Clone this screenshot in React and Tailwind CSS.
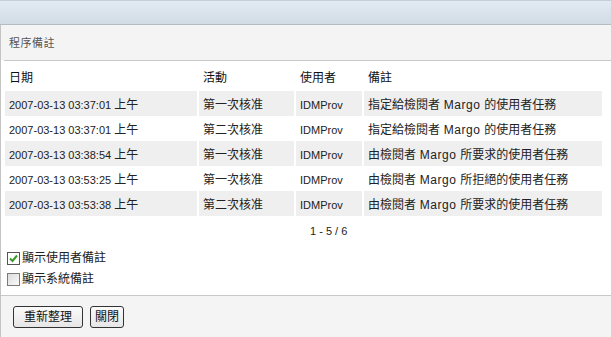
import React from "react";

const rows = [
  ["2007-03-13 03:37:01 上午", "第一次核准", "IDMProv", "指定給檢閱者 Margo 的使用者任務"],
  ["2007-03-13 03:37:01 上午", "第二次核准", "IDMProv", "指定給檢閱者 Margo 的使用者任務"],
  ["2007-03-13 03:38:54 上午", "第一次核准", "IDMProv", "由檢閱者 Margo 所要求的使用者任務"],
  ["2007-03-13 03:53:25 上午", "第一次核准", "IDMProv", "由檢閱者 Margo 所拒絕的使用者任務"],
  ["2007-03-13 03:53:38 上午", "第二次核准", "IDMProv", "由檢閱者 Margo 所要求的使用者任務"],
];

// CJK runs a touch bigger than latin runs, like the old MS fonts did
function Mixed({ text, latin = "text-[11px]" }) {
  const parts = text.split(/([\u3000-\u9fff\uff00-\uffef]+)/).filter(Boolean);
  return (
    <span className="whitespace-pre">
      {parts.map((p, i) =>
        /[\u3000-\u9fff]/.test(p) ? (
          <span key={i} className="text-[12px]">{p}</span>
        ) : (
          <span key={i} className={latin}>{p}</span>
        )
      )}
    </span>
  );
}

function Check({ checked }) {
  return (
    <span
      className={`flex h-[13px] w-[13px] items-center justify-center border ${
        checked ? "border-[#555] bg-white" : "border-[#7a7a7a] bg-gradient-to-br from-[#dcdcdc] to-[#fafafa]"
      }`}
    >
      {checked && (
        <svg width="9" height="9" viewBox="0 0 9 9">
          <path d="M1 4.5 L3.5 7 L8 1.5" fill="none" stroke="#3a9a2a" strokeWidth="2" />
        </svg>
      )}
    </span>
  );
}

export default function App() {
  return (
    <div
      className="h-[337px] w-[611px] overflow-hidden bg-white text-[#222]"
      style={{ fontFamily: '"Liberation Sans", "Noto Sans CJK TC", sans-serif' }}
    >
      <div className="h-[25px] border-t border-b border-t-[#c4ced8] border-b-[#b4bcc6] bg-gradient-to-b from-[#e2eaf2] to-[#d2dce5]" />
      <div className="border-l border-[#c4c4c4]">
        <div className="flex h-[35px] items-center bg-[#f4f4f4] pl-[8px] pt-[1px] text-[11px] tracking-[0.5px] text-[#555]">
          程序備註
        </div>
        <div className="ml-[3px] h-[1px] bg-[#c8c8c8]" />

        <div className="ml-[4px] mr-[9px] grid grid-cols-[192px_95px_66px_1fr] gap-x-[2px]">
          {["日期", "活動", "使用者", "備註"].map((h) => (
            <div key={h} className="flex h-[30px] items-center pt-[4px] pl-[4px] text-[12px] text-[#111]">
              {h}
            </div>
          ))}
          {rows.map((r, i) =>
            r.map((c, j) => (
              <div
                key={i + "-" + j}
                className={`flex h-[25px] items-center pl-[4px] whitespace-nowrap ${
                  i % 2 === 0 ? "bg-[#efefef]" : "bg-white"
                }`}
              >
                <Mixed text={c} latin={j === 3 ? "text-[12px] tracking-[0.5px]" : "text-[11px]"} />
              </div>
            ))
          )}
        </div>

        <div className="flex h-[30px] items-center pl-[309px] text-[11px]">1 - 5 / 6</div>

        <div className="flex flex-col gap-[7px] pl-[6px] pt-[5px] text-[12px]">
          <label className="flex h-[14px] items-center gap-[2px]">
            <Check checked />
            <span>顯示使用者備註</span>
          </label>
          <label className="flex h-[14px] items-center gap-[2px]">
            <Check />
            <span>顯示系統備註</span>
          </label>
        </div>

        <div className="mt-[9px] h-[1px] bg-[#c8c8c8]" />
        <div className="flex h-[42px] items-center gap-[7px] border-b border-[#c8c8c8] bg-[#f4f4f4] pl-[12px]">
          <button className="h-[22px] w-[70px] rounded-[3px] border border-[#333] bg-gradient-to-b from-[#fbfbfb] to-[#e6e6e6] text-[12px] text-[#111]">
            重新整理
          </button>
          <button className="h-[22px] w-[34px] rounded-[3px] border border-[#333] bg-gradient-to-b from-[#fbfbfb] to-[#e6e6e6] text-[12px] text-[#111]">
            關閉
          </button>
        </div>
      </div>
    </div>
  );
}
